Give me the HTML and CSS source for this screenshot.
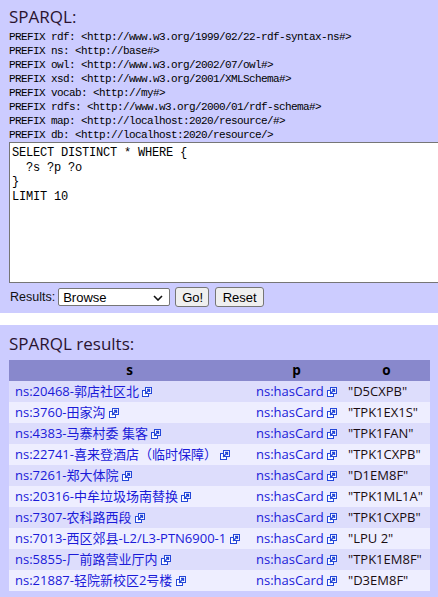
FILE: index.html
```html
<!DOCTYPE html>
<html>
<head>
<meta charset="utf-8">
<title>SPARQL</title>
<link rel="stylesheet" href="styles.css">
</head>
<body>
<svg width="0" height="0" class="defs">
  <defs>
    <symbol id="ext" viewBox="0 0 10 10">
      <rect x="0.5" y="3.5" width="6" height="6" fill="#fff" stroke="#2447d8" stroke-width="1"/>
      <rect x="3.5" y="0.5" width="6" height="6" fill="#fff" stroke="#2447d8" stroke-width="1"/>
      <path d="M3 7 L7.5 2.5 M5 2.5 H7.5 V5" fill="none" stroke="#2447d8" stroke-width="1.4"/>
    </symbol>
  </defs>
</svg>
<div class="panel query-panel">
  <h2 class="title">SPARQL:</h2>
  <pre class="prefixes">PREFIX rdf: &lt;http://www.w3.org/1999/02/22-rdf-syntax-ns#&gt;
PREFIX ns: &lt;http://base#&gt;
PREFIX owl: &lt;http://www.w3.org/2002/07/owl#&gt;
PREFIX xsd: &lt;http://www.w3.org/2001/XMLSchema#&gt;
PREFIX vocab: &lt;http://my#&gt;
PREFIX rdfs: &lt;http://www.w3.org/2000/01/rdf-schema#&gt;
PREFIX map: &lt;http://localhost:2020/resource/#&gt;
PREFIX db: &lt;http://localhost:2020/resource/&gt;</pre>
  <textarea class="query" spellcheck="false">SELECT DISTINCT * WHERE {
  ?s ?p ?o
}
LIMIT 10</textarea>
  <div class="controls">
    <label class="results-label">Results:</label>
    <div class="select-wrap">
      <span class="select-value">Browse</span>
      <svg class="chevron" width="10" height="6" viewBox="0 0 10 6"><path d="M1 1 L5 5 L9 1" fill="none" stroke="#111" stroke-width="1.6"/></svg>
    </div>
    <button class="btn go">Go!</button>
    <button class="btn reset">Reset</button>
  </div>
</div>
<div class="panel results-panel">
  <h2 class="title">SPARQL results:</h2>
  <table class="results">
    <colgroup><col class="c-s"><col class="c-p"><col class="c-o"></colgroup>
    <thead><tr><th>s</th><th>p</th><th>o</th></tr></thead>
    <tbody>
      <tr><td><a href="#">ns:20468-郭店社区北</a> <svg class="ext"><use href="#ext"/></svg></td><td><a href="#">ns:hasCard</a> <svg class="ext"><use href="#ext"/></svg></td><td class="lit">"D5CXPB"</td></tr>
      <tr><td><a href="#">ns:3760-田家沟</a> <svg class="ext"><use href="#ext"/></svg></td><td><a href="#">ns:hasCard</a> <svg class="ext"><use href="#ext"/></svg></td><td class="lit">"TPK1EX1S"</td></tr>
      <tr><td><a href="#">ns:4383-马寨村委 集客</a> <svg class="ext"><use href="#ext"/></svg></td><td><a href="#">ns:hasCard</a> <svg class="ext"><use href="#ext"/></svg></td><td class="lit">"TPK1FAN"</td></tr>
      <tr><td><a href="#">ns:22741-喜来登酒店（临时保障）</a> <svg class="ext"><use href="#ext"/></svg></td><td><a href="#">ns:hasCard</a> <svg class="ext"><use href="#ext"/></svg></td><td class="lit">"TPK1CXPB"</td></tr>
      <tr><td><a href="#">ns:7261-郑大体院</a> <svg class="ext"><use href="#ext"/></svg></td><td><a href="#">ns:hasCard</a> <svg class="ext"><use href="#ext"/></svg></td><td class="lit">"D1EM8F"</td></tr>
      <tr><td><a href="#">ns:20316-中牟垃圾场南替换</a> <svg class="ext"><use href="#ext"/></svg></td><td><a href="#">ns:hasCard</a> <svg class="ext"><use href="#ext"/></svg></td><td class="lit">"TPK1ML1A"</td></tr>
      <tr><td><a href="#">ns:7307-农科路西段</a> <svg class="ext"><use href="#ext"/></svg></td><td><a href="#">ns:hasCard</a> <svg class="ext"><use href="#ext"/></svg></td><td class="lit">"TPK1CXPB"</td></tr>
      <tr><td><a href="#">ns:7013-西区郊县-L2/L3-PTN6900-1</a> <svg class="ext"><use href="#ext"/></svg></td><td><a href="#">ns:hasCard</a> <svg class="ext"><use href="#ext"/></svg></td><td class="lit">"LPU 2"</td></tr>
      <tr><td><a href="#">ns:5855-厂前路营业厅内</a> <svg class="ext"><use href="#ext"/></svg></td><td><a href="#">ns:hasCard</a> <svg class="ext"><use href="#ext"/></svg></td><td class="lit">"TPK1EM8F"</td></tr>
      <tr><td><a href="#">ns:21887-轻院新校区2号楼</a> <svg class="ext"><use href="#ext"/></svg></td><td><a href="#">ns:hasCard</a> <svg class="ext"><use href="#ext"/></svg></td><td class="lit">"D3EM8F"</td></tr>
    </tbody>
  </table>
</div>
</body>
</html>
```

FILE: styles.css
```css
html, body {
  margin: 0;
  padding: 0;
  background: #ffffff;
  overflow: hidden;
}
body {
  font-family: "Open Sans", "Noto Sans CJK SC", sans-serif;
  color: #111;
}
.defs {
  position: absolute;
  width: 0;
  height: 0;
}
.panel {
  background: #ccccff;
  overflow: hidden;
}
.query-panel {
  height: 313px;
  box-sizing: border-box;
  padding: 6px 0 0 9px;
}
.results-panel {
  margin-top: 12px;
  height: 272px;
  box-sizing: border-box;
  padding: 8px 0 0 9px;
}
.title {
  margin: 0;
  font-size: 17px;
  line-height: 22px;
  font-weight: normal;
  color: #2a1330;
}
.prefixes {
  margin: 2px 0 0 0;
  font-family: "Liberation Mono", monospace;
  font-size: 11px;
  letter-spacing: -0.6px;
  line-height: 14px;
  color: #000;
}
.query {
  display: block;
  width: 470px;
  height: 141px;
  box-sizing: border-box;
  margin: 0;
  padding: 3px 2px;
  border: 1px solid #767676;
  background: #fff;
  font-family: "Liberation Mono", monospace;
  font-size: 12px;
  letter-spacing: -0.2px;
  line-height: 14.5px;
  color: #000;
  resize: none;
  outline: none;
}
.controls {
  display: flex;
  align-items: center;
  margin-top: 4px;
  height: 20px;
  font-family: "Liberation Sans", Arial, sans-serif;
  font-size: 13px;
}
.results-label {
  margin-left: 1px;
  font-size: 12.5px;
  color: #111;
}
.select-wrap {
  position: relative;
  display: flex;
  align-items: center;
  margin-left: 3px;
  width: 112px;
  height: 18px;
  box-sizing: border-box;
  border: 1px solid #767676;
  border-radius: 2px;
  background: #fff;
  padding-left: 4px;
}
.select-value {
  color: #000;
}
.chevron {
  position: absolute;
  right: 6px;
  top: 6px;
}
.btn {
  height: 20px;
  box-sizing: border-box;
  padding: 0 6px;
  border: 1px solid #767676;
  border-radius: 3px;
  background: #efefef;
  font-family: "Liberation Sans", Arial, sans-serif;
  font-size: 13px;
  color: #000;
}
.go {
  margin-left: 5px;
  width: 34px;
}
.reset {
  margin-left: 6px;
  width: 49px;
}
.results {
  margin-top: 5px;
  border-collapse: collapse;
  table-layout: fixed;
  width: 421px;
  font-size: 13px;
}
.c-s { width: 241px; }
.c-p { width: 93px; }
.c-o { width: 87px; }
.results th {
  background: #8888cc;
  height: 21px;
  padding: 0;
  font-weight: bold;
  font-size: 13.5px;
  color: #000;
  text-align: center;
  line-height: 21px;
}
.results td {
  height: 21px;
  padding: 0 0 0 6px;
  line-height: 21px;
  white-space: nowrap;
  overflow: hidden;
  vertical-align: middle;
}
.results td:nth-child(3) {
  padding-left: 5px;
}
.results tbody tr:nth-child(odd) td {
  background: #ddddfc;
}
.results tbody tr:nth-child(even) td {
  background: #eeeeff;
}
.results a {
  color: #1a1ad8;
  text-decoration: none;
}
.lit {
  color: #1a0d12;
}
.ext {
  width: 10px;
  height: 10px;
  vertical-align: -1px;
}
```
